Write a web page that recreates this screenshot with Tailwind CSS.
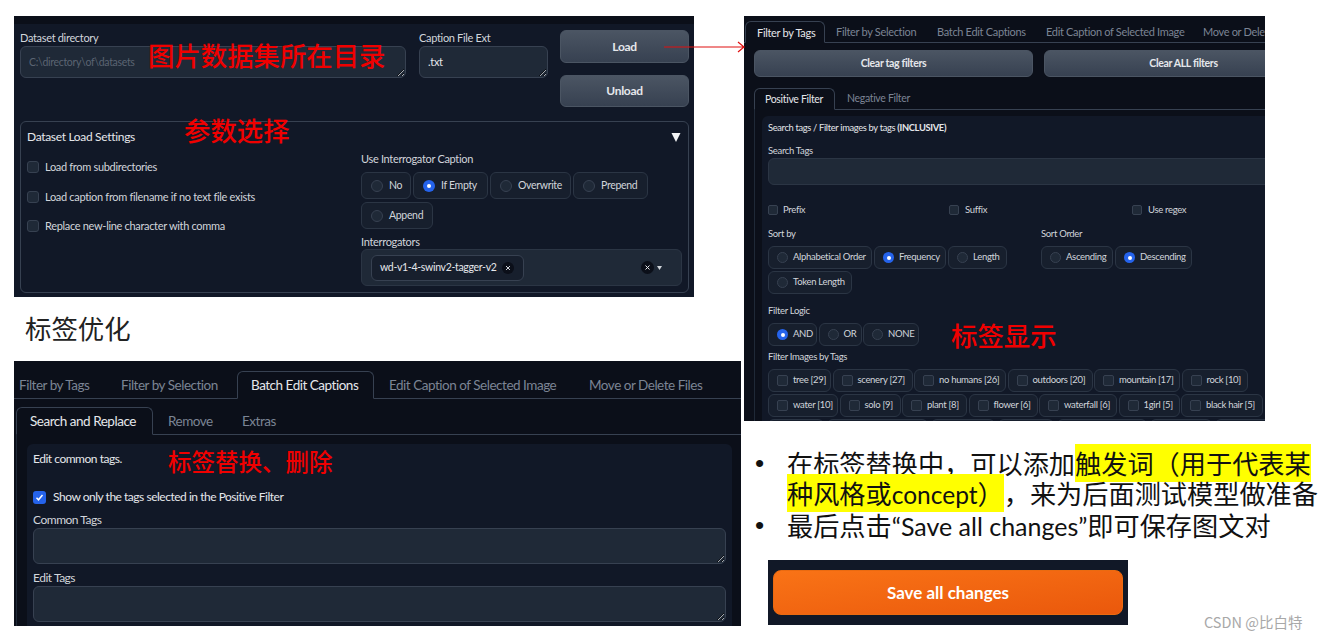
<!DOCTYPE html>
<html lang="zh-CN">
<head>
    <meta charset="UTF-8">
    <title>Dataset Tag Editor</title>
    <script src="https://cdn.jsdelivr.net/npm/@tailwindcss/browser@4"></script>
</head>
<body class="relative w-[1319px] h-[638px] overflow-hidden bg-white font-['Noto_Sans_CJK_SC',sans-serif] text-[#d1d5db] whitespace-nowrap">

    <!-- dataset load panel -->
    <section class="absolute left-[14px] top-[16px] w-[680px] h-[281px] bg-[#111827] overflow-hidden font-['Lato',sans-serif] tracking-[-0.02em]">
        <div class="h-2 bg-[#0b0f19]"></div>
        <div class="flex pl-[6px]">
            <div class="w-[386px] pt-[7px]">
                <div class="h-[15px] leading-[13px] text-[11px]">Dataset directory</div>
                <textarea class="block w-full h-[32px] px-2 pt-[6px] leading-[18px] text-[10.5px] bg-[#1f2937] border border-[#374151] rounded-md resize-y [color-scheme:dark] placeholder:text-[#5b6472]" placeholder="C:\directory\of\datasets"></textarea>
            </div>
            <div class="w-[129px] ml-[13px] pt-[7px]">
                <div class="h-[15px] leading-[13px] text-[11px]">Caption File Ext</div>
                <textarea class="block w-full h-[32px] px-2 pt-[6px] leading-[18px] text-[11px] text-[#e5e7eb] bg-[#1f2937] border border-[#374151] rounded-md resize-y [color-scheme:dark]">.txt</textarea>
            </div>
            <div class="w-[129px] ml-3 pt-[6px] flex flex-col gap-3">
                <div class="h-[33px] flex items-center justify-center text-[12px] font-bold text-[#e5e7eb] rounded-md border border-[#4b5563] bg-gradient-to-b from-[#4b5563] to-[#374151]">Load</div>
                <div class="h-[32px] flex items-center justify-center text-[12px] font-bold text-[#e5e7eb] rounded-md border border-[#4b5563] bg-gradient-to-b from-[#4b5563] to-[#374151]">Unload</div>
            </div>
        </div>
        <div class="mt-[14px] ml-[6px] w-[669px] h-[172px] border border-[#374151] rounded-md px-[6px]">
            <div class="h-[30px] flex items-center justify-between text-[12px] text-[#e5e7eb]">
                <span>Dataset Load Settings</span>
                <svg class="w-[10px] h-[10px] mr-px" viewBox="0 0 10 10"><path d="M.5 1h9L5 10z" fill="#f3f4f6"/></svg>
            </div>
            <div class="flex">
                <div class="w-[334px] pt-[7px] flex flex-col gap-[14px] text-[11px]">
                    <label class="h-4 flex items-center gap-[6px]"><span class="w-3 h-3 rounded-[3px] bg-[#1f2937] border border-[#374151]"></span>Load from subdirectories</label>
                    <label class="h-4 flex items-center gap-[6px]"><span class="w-3 h-3 rounded-[3px] bg-[#1f2937] border border-[#374151]"></span>Load caption from filename if no text file exists</label>
                    <label class="h-4 flex items-center gap-[6px] -mt-px"><span class="w-3 h-3 rounded-[3px] bg-[#1f2937] border border-[#374151]"></span>Replace new-line character with comma</label>
                </div>
                <div class="w-[321px]">
                    <div class="h-[14px] leading-[14px] text-[11px]">Use Interrogator Caption</div>
                    <div class="mt-[6px] flex flex-wrap gap-x-[2px] gap-y-[3px] text-[10.5px]">
                        <label class="w-[50px] h-[27px] pl-[9px] flex items-center gap-[6px] rounded-md bg-[#171f2d] border border-[#2b3544]"><span class="w-3 h-3 rounded-full bg-[#1f2937] border border-[#374151]"></span>No</label>
                        <label class="w-[75px] h-[27px] pl-[9px] flex items-center gap-[6px] rounded-md bg-[#171f2d] border border-[#2b3544]"><span class="w-3 h-3 rounded-full bg-[#2563eb] flex items-center justify-center"><span class="w-1 h-1 rounded-full bg-white"></span></span>If Empty</label>
                        <label class="w-[81px] h-[27px] pl-[9px] flex items-center gap-[6px] rounded-md bg-[#171f2d] border border-[#2b3544]"><span class="w-3 h-3 rounded-full bg-[#1f2937] border border-[#374151]"></span>Overwrite</label>
                        <label class="w-[75px] h-[27px] pl-[9px] flex items-center gap-[6px] rounded-md bg-[#171f2d] border border-[#2b3544]"><span class="w-3 h-3 rounded-full bg-[#1f2937] border border-[#374151]"></span>Prepend</label>
                        <label class="w-[72px] h-[27px] pl-[9px] flex items-center gap-[6px] rounded-md bg-[#171f2d] border border-[#2b3544]"><span class="w-3 h-3 rounded-full bg-[#1f2937] border border-[#374151]"></span>Append</label>
                    </div>
                    <div class="mt-[5px] h-[15px] leading-[15px] text-[11px]">Interrogators</div>
                    <div class="h-[37px] pl-[9px] pr-[19px] flex items-center rounded-md bg-[#1f2937] border border-[#2b3544]">
                        <div class="w-[153px] h-[26px] pl-[8px] pr-[9px] flex items-center justify-between text-[10.5px] text-[#e5e7eb] rounded-md bg-[#171f2d] border border-[#374151]">
                            wd-v1-4-swinv2-tagger-v2
                            <svg class="w-3 h-3 shrink-0" viewBox="0 0 12 12"><circle cx="6" cy="6" r="6" fill="#0b0f19"/><path d="M4 4l4 4M8 4l-4 4" stroke="#d1d5db"/></svg>
                        </div>
                        <svg class="w-[13px] h-[13px] ml-auto" viewBox="0 0 13 13"><circle cx="6.5" cy="6.5" r="6.500" fill="#0b0f19"/><path d="M4.500 4.500l4 4M8.500 4.500l-4 4" stroke="#e5e7eb"/></svg>
                        <svg class="w-[5px] h-[4px] ml-[3px]" viewBox="0 0 5 4"><path d="M0 0h5L2.500 4z" fill="#d1d5db"/></svg>
                    </div>
                </div>
            </div>
        </div>
    </section>

    <!-- filter by tags panel -->
    <section class="absolute left-[744px] top-[16px] w-[521px] h-[405px] bg-[#0b0f19] overflow-hidden font-['Lato',sans-serif] tracking-[-0.02em]">
        <div class="h-[27px] pt-[5px] flex items-end border-b border-[#374151] text-[11px] text-[#7b8494]">
            <div class="ml-px w-[80px] shrink-0 h-[22px] -mb-px pl-[11px] pt-[2px] flex items-center text-[#e5e7eb] bg-[#0b0f19] border border-[#374151] border-b-[#0b0f19] rounded-t-md">Filter by Tags</div>
            <div class="w-[101px] shrink-0 h-[22px] ml-[11px] pt-[2px] flex items-center">Filter by Selection</div>
            <div class="w-[109px] shrink-0 h-[22px] pt-[2px] flex items-center">Batch Edit Captions</div>
            <div class="w-[157px] shrink-0 h-[22px] pt-[2px] flex items-center">Edit Caption of Selected Image</div>
            <div class="shrink-0 h-[22px] pt-[2px] flex items-center">Move or Delete Files</div>
        </div>
        <div class="mt-[7px] ml-[10px] flex gap-[11px]">
            <div class="w-[279px] h-[27px] pt-px shrink-0 flex items-center justify-center text-[10.5px] font-bold text-[#e5e7eb] rounded-md border border-[#4b5563] bg-gradient-to-b from-[#4b5563] to-[#374151]">Clear tag filters</div>
            <div class="w-[279px] h-[27px] pt-px shrink-0 flex items-center justify-center text-[10.5px] font-bold text-[#e5e7eb] rounded-md border border-[#4b5563] bg-gradient-to-b from-[#4b5563] to-[#374151]">Clear ALL filters</div>
        </div>
        <div class="mt-[11px] ml-[10px] h-[22px] flex items-end border-b border-[#374151] text-[10.5px] text-[#7b8494] w-[600px]">
            <div class="w-[81px] h-[22px] -mb-px pl-[10px] pt-[2px] flex items-center text-[#e5e7eb] bg-[#0b0f19] border border-[#374151] border-b-[#0b0f19] rounded-t-md">Positive Filter</div>
            <div class="h-[22px] ml-[12px] pt-[2px] flex items-center">Negative Filter</div>
        </div>
        <div class="ml-[10px] pl-[7px] pt-[6px] border-l border-[#1f2937]">
            <div class="w-[600px] h-[320px] pl-[6px] pt-[6px] rounded-md bg-[#111827] text-[9.5px]">
                <div class="h-[12px] leading-[12px] text-[9.3px] text-[#e5e7eb]">Search tags / Filter images by tags <b class="font-bold">(INCLUSIVE)</b></div>
                <div class="mt-[11px] h-[12px] leading-[12px]">Search Tags</div>
                <div class="mt-[1px] h-[27px] rounded-md bg-[#1f2937] border border-[#2b3544]"></div>
                <div class="mt-[19px] h-3 flex">
                    <label class="w-[181px] flex items-center gap-[5px]"><span class="w-[10px] h-[10px] rounded-[2px] bg-[#1f2937] border border-[#374151]"></span>Prefix</label>
                    <label class="w-[183px] flex items-center gap-[6px]"><span class="w-[10px] h-[10px] rounded-[2px] bg-[#1f2937] border border-[#374151]"></span>Suffix</label>
                    <label class="flex items-center gap-[6px]"><span class="w-[10px] h-[10px] rounded-[2px] bg-[#1f2937] border border-[#374151]"></span>Use regex</label>
                </div>
                <div class="mt-[12px] flex">
                    <div class="w-[273px]">
                        <div class="h-[12px] leading-[12px]">Sort by</div>
                        <div class="mt-[6px] flex flex-wrap gap-x-[2px] gap-y-[2px]">
                            <label class="w-[104px] h-[23px] pl-2 flex items-center gap-[5px] rounded-md bg-[#171f2d] border border-[#2b3544]"><span class="w-[11px] h-[11px] rounded-full bg-[#1f2937] border border-[#374151]"></span>Alphabetical Order</label>
                            <label class="w-[72px] h-[23px] pl-2 flex items-center gap-[5px] rounded-md bg-[#171f2d] border border-[#2b3544]"><span class="w-[11px] h-[11px] rounded-full bg-[#2563eb] flex items-center justify-center"><span class="w-1 h-1 rounded-full bg-white"></span></span>Frequency</label>
                            <label class="w-[59px] h-[23px] pl-2 flex items-center gap-[5px] rounded-md bg-[#171f2d] border border-[#2b3544]"><span class="w-[11px] h-[11px] rounded-full bg-[#1f2937] border border-[#374151]"></span>Length</label>
                            <label class="w-[84px] h-[23px] pl-2 flex items-center gap-[5px] rounded-md bg-[#171f2d] border border-[#2b3544]"><span class="w-[11px] h-[11px] rounded-full bg-[#1f2937] border border-[#374151]"></span>Token Length</label>
                        </div>
                    </div>
                    <div>
                        <div class="h-[12px] leading-[12px]">Sort Order</div>
                        <div class="mt-[6px] flex gap-[2px]">
                            <label class="w-[72px] h-[23px] pl-2 flex items-center gap-[5px] rounded-md bg-[#171f2d] border border-[#2b3544]"><span class="w-[11px] h-[11px] rounded-full bg-[#1f2937] border border-[#374151]"></span>Ascending</label>
                            <label class="w-[77px] h-[23px] pl-2 flex items-center gap-[5px] rounded-md bg-[#171f2d] border border-[#2b3544]"><span class="w-[11px] h-[11px] rounded-full bg-[#2563eb] flex items-center justify-center"><span class="w-1 h-1 rounded-full bg-white"></span></span>Descending</label>
                        </div>
                    </div>
                </div>
                <div class="mt-[11px] h-[12px] leading-[12px]">Filter Logic</div>
                <div class="mt-[6px] flex gap-[1.5px]">
                    <label class="w-[49px] h-[23px] pl-2 flex items-center gap-[5px] rounded-md bg-[#171f2d] border border-[#2b3544]"><span class="w-[11px] h-[11px] rounded-full bg-[#2563eb] flex items-center justify-center"><span class="w-1 h-1 rounded-full bg-white"></span></span>AND</label>
                    <label class="w-[43px] h-[23px] pl-2 flex items-center gap-[5px] rounded-md bg-[#171f2d] border border-[#2b3544]"><span class="w-[11px] h-[11px] rounded-full bg-[#1f2937] border border-[#374151]"></span>OR</label>
                    <label class="w-[56px] h-[23px] pl-2 flex items-center gap-[5px] rounded-md bg-[#171f2d] border border-[#2b3544]"><span class="w-[11px] h-[11px] rounded-full bg-[#1f2937] border border-[#374151]"></span>NONE</label>
                </div>
                <div class="mt-[5px] h-[12px] leading-[12px]">Filter Images by Tags</div>
                <div class="mt-[6px] flex gap-[1.5px]">
                    <label class="w-[63px] h-[23px] pl-2 flex items-center gap-[5px] rounded-md bg-[#171f2d] border border-[#2b3544]"><span class="w-[11px] h-[11px] rounded-[2px] bg-[#1f2937] border border-[#374151]"></span>tree [29]</label>
                    <label class="w-[80px] h-[23px] pl-2 flex items-center gap-[5px] rounded-md bg-[#171f2d] border border-[#2b3544]"><span class="w-[11px] h-[11px] rounded-[2px] bg-[#1f2937] border border-[#374151]"></span>scenery [27]</label>
                    <label class="w-[92px] h-[23px] pl-2 flex items-center gap-[5px] rounded-md bg-[#171f2d] border border-[#2b3544]"><span class="w-[11px] h-[11px] rounded-[2px] bg-[#1f2937] border border-[#374151]"></span>no humans [26]</label>
                    <label class="w-[85px] h-[23px] pl-2 flex items-center gap-[5px] rounded-md bg-[#171f2d] border border-[#2b3544]"><span class="w-[11px] h-[11px] rounded-[2px] bg-[#1f2937] border border-[#374151]"></span>outdoors [20]</label>
                    <label class="w-[86px] h-[23px] pl-2 flex items-center gap-[5px] rounded-md bg-[#171f2d] border border-[#2b3544]"><span class="w-[11px] h-[11px] rounded-[2px] bg-[#1f2937] border border-[#374151]"></span>mountain [17]</label>
                    <label class="w-[66px] h-[23px] pl-2 flex items-center gap-[5px] rounded-md bg-[#171f2d] border border-[#2b3544]"><span class="w-[11px] h-[11px] rounded-[2px] bg-[#1f2937] border border-[#374151]"></span>rock [10]</label>
                </div>
                <div class="mt-[2px] flex gap-[1.5px]">
                    <label class="w-[70px] h-[23px] pl-2 flex items-center gap-[5px] rounded-md bg-[#171f2d] border border-[#2b3544]"><span class="w-[11px] h-[11px] rounded-[2px] bg-[#1f2937] border border-[#374151]"></span>water [10]</label>
                    <label class="w-[61px] h-[23px] pl-2 flex items-center gap-[5px] rounded-md bg-[#171f2d] border border-[#2b3544]"><span class="w-[11px] h-[11px] rounded-[2px] bg-[#1f2937] border border-[#374151]"></span>solo [9]</label>
                    <label class="w-[65px] h-[23px] pl-2 flex items-center gap-[5px] rounded-md bg-[#171f2d] border border-[#2b3544]"><span class="w-[11px] h-[11px] rounded-[2px] bg-[#1f2937] border border-[#374151]"></span>plant [8]</label>
                    <label class="w-[69px] h-[23px] pl-2 flex items-center gap-[5px] rounded-md bg-[#171f2d] border border-[#2b3544]"><span class="w-[11px] h-[11px] rounded-[2px] bg-[#1f2937] border border-[#374151]"></span>flower [6]</label>
                    <label class="w-[78px] h-[23px] pl-2 flex items-center gap-[5px] rounded-md bg-[#171f2d] border border-[#2b3544]"><span class="w-[11px] h-[11px] rounded-[2px] bg-[#1f2937] border border-[#374151]"></span>waterfall [6]</label>
                    <label class="w-[61px] h-[23px] pl-2 flex items-center gap-[5px] rounded-md bg-[#171f2d] border border-[#2b3544]"><span class="w-[11px] h-[11px] rounded-[2px] bg-[#1f2937] border border-[#374151]"></span>1girl [5]</label>
                    <label class="w-[82px] h-[23px] pl-2 flex items-center gap-[5px] rounded-md bg-[#171f2d] border border-[#2b3544]"><span class="w-[11px] h-[11px] rounded-[2px] bg-[#1f2937] border border-[#374151]"></span>black hair [5]</label>
                </div>
                <!-- next row of tags, only its top edge is inside the crop -->
                <div class="mt-[2px] flex gap-[3px]">
                    <div class="w-[56px] h-[23px] rounded-md bg-[#171f2d] border border-[#2b3544]"></div>
                    <div class="w-[101px] h-[23px] rounded-md bg-[#171f2d] border border-[#2b3544]"></div>
                    <div class="w-[64px] h-[23px] rounded-md bg-[#171f2d] border border-[#2b3544]"></div>
                    <div class="w-[56px] h-[23px] rounded-md bg-[#171f2d] border border-[#2b3544]"></div>
                    <div class="w-[90px] h-[23px] rounded-md bg-[#171f2d] border border-[#2b3544]"></div>
                    <div class="w-[62px] h-[23px] rounded-md bg-[#171f2d] border border-[#2b3544]"></div>
                    <div class="w-[60px] h-[23px] rounded-md bg-[#171f2d] border border-[#2b3544]"></div>
                </div>
            </div>
        </div>
    </section>

    <!-- batch edit captions panel -->
    <section class="absolute left-[14px] top-[361px] w-[727px] h-[265px] bg-[#0b0f19] overflow-hidden font-['Lato',sans-serif] tracking-[-0.03em]">
        <div class="h-[38px] pt-[10px] pl-[5px] flex items-end border-b border-[#374151] text-[13.5px] text-[#7b8494]">
            <div class="w-[102px] h-[27px] pt-px flex items-center">Filter by Tags</div>
            <div class="w-[116px] h-[27px] pt-px flex items-center">Filter by Selection</div>
            <div class="w-[137px] h-[28px] -mb-px pl-[13px] pt-px flex items-center text-[#e5e7eb] bg-[#0b0f19] border border-[#374151] border-b-[#0b0f19] rounded-t-md">Batch Edit Captions</div>
            <div class="w-[200px] h-[27px] ml-[15px] pt-px flex items-center">Edit Caption of Selected Image</div>
            <div class="h-[27px] pt-px flex items-center">Move or Delete Files</div>
        </div>
        <div class="mt-[8px] ml-[2px] h-[28px] flex items-end border-b border-[#374151] text-[13.5px] text-[#7b8494]">
            <div class="w-[137px] h-[28px] -mb-px pl-[13px] pt-px flex items-center text-[#e5e7eb] bg-[#0b0f19] border border-[#374151] border-b-[#0b0f19] rounded-t-md">Search and Replace</div>
            <div class="w-[74px] h-[27px] ml-[15px] pt-px flex items-center">Remove</div>
            <div class="h-[27px] pt-px flex items-center">Extras</div>
        </div>
        <div class="ml-[2px] pl-[10px] pr-[9px] pt-[9px] border-l border-[#1f2937]">
            <div class="h-[190px] px-[6px] pt-[6px] rounded-md bg-[#111827]">
                <div class="h-[18px] leading-[18px] text-[12px] text-[#e5e7eb]">Edit common tags.</div>
                <label class="mt-[22px] h-[14px] flex items-center gap-[7px] text-[12px] text-[#e5e7eb]">
                    <span class="w-[13px] h-[13px] rounded-[3px] bg-[#2563eb] flex items-center justify-center">
                        <svg class="w-[9px] h-[9px]" viewBox="0 0 9 9" fill="none"><path d="M1.500 4.800l2 2 4-4.800" stroke="#fff" stroke-width="1.500"/></svg>
                    </span>
                    Show only the tags selected in the Positive Filter
                </label>
                <div class="mt-[8px] h-[16px] leading-[16px] text-[12px]">Common Tags</div>
                <textarea class="block w-full h-[36px] bg-[#1f2937] border border-[#374151] rounded-md resize-y [color-scheme:dark]"></textarea>
                <div class="mt-[5px] h-[17px] leading-[17px] text-[12px]">Edit Tags</div>
                <textarea class="block w-full h-[36px] bg-[#1f2937] border border-[#374151] rounded-md resize-y [color-scheme:dark]"></textarea>
            </div>
        </div>
    </section>

    <!-- save button crop -->
    <section class="absolute left-[768px] top-[560px] w-[360px] h-[65px] bg-[#111827] pl-[5px] pt-[10px] font-['Lato',sans-serif]">
        <div class="w-[350px] h-[45px] flex items-center justify-center text-[17px] font-bold text-white rounded-lg border border-[#ea6a10] bg-gradient-to-br from-[#f97316] to-[#ea580c]">Save all changes</div>
    </section>

    <!-- slide annotations -->
    <div class="absolute left-[148px] top-[36px] text-[26.4px] leading-[38px] font-medium text-[#f00000]">图片数据集所在目录</div>
    <div class="absolute left-[184px] top-[111px] text-[26.4px] leading-[38px] font-medium text-[#f00000]">参数选择</div>
    <div class="absolute left-[951px] top-[316px] text-[26.4px] leading-[38px] font-medium text-[#f00000]">标签显示</div>
    <div class="absolute left-[168px] top-[443px] text-[23.5px] leading-[36px] font-medium text-[#f00000]">标签替换、删除</div>
    <div class="absolute left-[25px] top-[309px] text-[26.4px] leading-[38px] text-[#222]">标签优化</div>

    <svg class="absolute left-[664px] top-[40px] w-[84px] h-[14px]" viewBox="0 0 84 14" fill="none">
        <path d="M0 7h80M74 2l6 5-6 5" stroke="#e01010" stroke-width="1.200"/>
    </svg>

    <ul class="absolute left-[755px] top-[448px] text-[26.2px] leading-[30px] text-[#111] [text-spacing-trim:space-all]">
        <li class="flex">
            <span class="w-[32px] font-['Liberation_Sans',sans-serif]">•</span>
            <span>在标签替换中，可以添加<span class="bg-[#ffff00]">触发词（用于代表某</span><br><span class="bg-[#ffff00]">种风格或<span class="font-['Lato',sans-serif] text-[24.5px]">concept</span>）</span>，来为后面测试模型做准备</span>
        </li>
        <li class="flex">
            <span class="w-[32px] font-['Liberation_Sans',sans-serif]">•</span>
            <span>最后点击<span class="font-['Lato',sans-serif] text-[25px]">“Save all changes”</span>即可保存图文对</span>
        </li>
    </ul>

    <div class="absolute left-[1204px] top-[612px] text-[14.5px] leading-[20px] text-[#a8a8a8]">CSDN @比白特</div>
</body>
</html>
